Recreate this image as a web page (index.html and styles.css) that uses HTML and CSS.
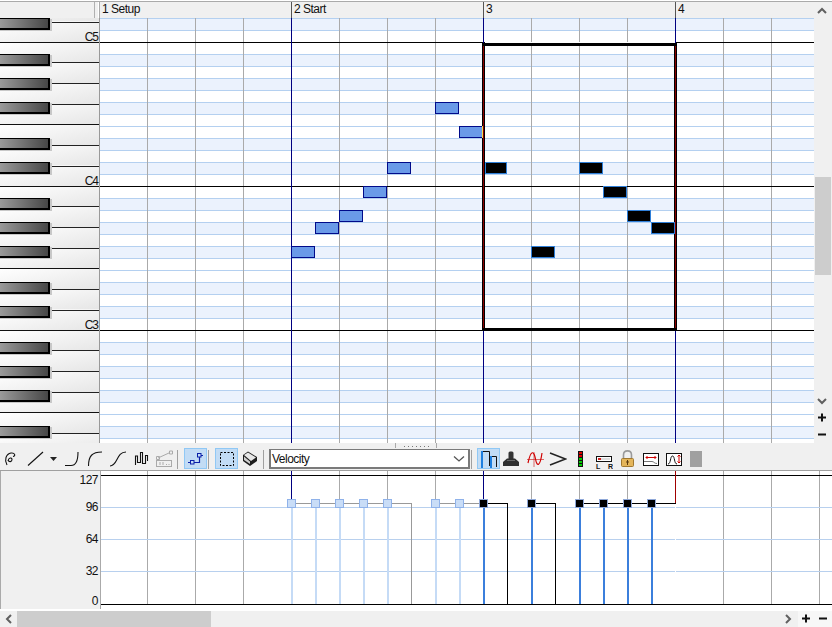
FILE: index.html
```html
<!DOCTYPE html>
<html lang="en">
<head>
<meta charset="utf-8">
<title>Piano roll</title>
<link rel="stylesheet" href="styles.css">
</head>
<body>
<div class="app">
  <div class="upper">
    <div class="editor">
      <div class="ruler">
        <div class="ruler-corner"></div>
        <div class="bar bar-first">1 Setup</div>
        <div class="bar">2 Start</div>
        <div class="bar">3</div>
        <div class="bar bar-last">4</div>
      </div>
      <div class="roll">
        <svg class="piano" viewBox="0 18 100 425" width="100" height="425">
          <defs>
            <linearGradient id="wk" x1="0" y1="0" x2="1" y2="1">
              <stop offset="0" stop-color="#ffffff"/><stop offset="0.45" stop-color="#f4f4f4"/><stop offset="1" stop-color="#e6e6e6"/>
            </linearGradient>
            <linearGradient id="bk" x1="0" y1="0" x2="1" y2="0">
              <stop offset="0" stop-color="#9a9a9a"/><stop offset="1" stop-color="#474747"/>
            </linearGradient>
            <g id="blackkey">
              <rect x="0" y="1" width="52" height="12" fill="#c8c8c8"/>
              <rect x="0" y="0" width="50" height="12" fill="#000"/>
              <rect x="0" y="1" width="48" height="9" fill="url(#bk)"/>
              <rect x="48" y="3" width="1" height="5" fill="#000"/>
            </g>
            <g id="octave">
              <rect x="0" y="0" width="99" height="21" fill="url(#wk)"/>
              <rect x="0" y="21" width="99" height="20" fill="url(#wk)"/>
              <rect x="0" y="41" width="99" height="21" fill="url(#wk)"/>
              <rect x="0" y="62" width="99" height="20" fill="url(#wk)"/>
              <rect x="0" y="82" width="99" height="21" fill="url(#wk)"/>
              <rect x="0" y="103" width="99" height="20" fill="url(#wk)"/>
              <rect x="0" y="123" width="99" height="21" fill="url(#wk)"/>
              <rect x="0" y="0" width="100" height="1" fill="#111"/>
              <rect x="0" y="82" width="100" height="1" fill="#111"/>
              <rect x="50" y="20" width="50" height="1" fill="#222"/>
              <rect x="50" y="41" width="50" height="1" fill="#222"/>
              <rect x="50" y="62" width="50" height="1" fill="#222"/>
              <rect x="50" y="103" width="50" height="1" fill="#222"/>
              <rect x="50" y="124" width="50" height="1" fill="#222"/>
              <use href="#blackkey" y="12"/>
              <use href="#blackkey" y="36"/>
              <use href="#blackkey" y="60"/>
              <use href="#blackkey" y="96"/>
              <use href="#blackkey" y="120"/>
            </g>
          </defs>
          <use href="#octave" y="-102"/>
          <use href="#octave" y="42"/>
          <use href="#octave" y="186"/>
          <use href="#octave" y="330"/>
          <rect x="99" y="18" width="1" height="425" fill="#999"/>
          <text class="key-label" x="98" y="41" text-anchor="end">C5</text>
          <text class="key-label" x="98" y="185" text-anchor="end">C4</text>
          <text class="key-label" x="98" y="329" text-anchor="end">C3</text>
        </svg>
        <svg class="grid" viewBox="100 18 714 425" width="714" height="425" shape-rendering="crispEdges">
          <defs>
            <pattern id="rows" patternUnits="userSpaceOnUse" x="100" y="42" width="48" height="144">
              <rect width="48" height="144" fill="#fff"/>
              <rect y="12" width="48" height="12" fill="#ebf2fd"/>
              <rect y="36" width="48" height="12" fill="#ebf2fd"/>
              <rect y="60" width="48" height="12" fill="#ebf2fd"/>
              <rect y="96" width="48" height="12" fill="#ebf2fd"/>
              <rect y="120" width="48" height="12" fill="#ebf2fd"/>
              <rect y="0" width="48" height="1" fill="#b4d0f0"/>
              <rect y="12" width="48" height="1" fill="#b4d0f0"/>
              <rect y="24" width="48" height="1" fill="#b4d0f0"/>
              <rect y="36" width="48" height="1" fill="#b4d0f0"/>
              <rect y="48" width="48" height="1" fill="#b4d0f0"/>
              <rect y="60" width="48" height="1" fill="#b4d0f0"/>
              <rect y="72" width="48" height="1" fill="#b4d0f0"/>
              <rect y="84" width="48" height="1" fill="#b4d0f0"/>
              <rect y="96" width="48" height="1" fill="#b4d0f0"/>
              <rect y="108" width="48" height="1" fill="#b4d0f0"/>
              <rect y="120" width="48" height="1" fill="#b4d0f0"/>
              <rect y="132" width="48" height="1" fill="#b4d0f0"/>
              <rect x="47" width="1" height="144" fill="#aaa"/>
            </pattern>
          </defs>
          <rect x="100" y="18" width="714" height="425" fill="url(#rows)"/>
          <rect x="100" y="42" width="714" height="1" fill="#000"/>
          <rect x="100" y="186" width="714" height="1" fill="#000"/>
          <rect x="100" y="330" width="714" height="1" fill="#000"/>
          <rect x="291" y="18" width="1" height="425" fill="#000080"/>
          <rect x="483" y="18" width="1" height="425" fill="#000080"/>
          <rect x="675" y="18" width="1" height="425" fill="#000080"/>
          <g class="note">
            <rect x="291.5" y="246.5" width="23" height="11"/>
            <rect x="315.5" y="222.5" width="23" height="11"/>
            <rect x="339.5" y="210.5" width="23" height="11"/>
            <rect x="363.5" y="186.5" width="23" height="11"/>
            <rect x="387.5" y="162.5" width="23" height="11"/>
            <rect x="435.5" y="102.5" width="23" height="11"/>
            <rect x="459.5" y="126.5" width="23" height="11"/>
          </g>
          <rect x="485" y="42" width="190" height="1" fill="#fff"/>
          <rect x="482" y="43" width="195" height="3" fill="#000"/>
          <rect x="482" y="328" width="195" height="3" fill="#000"/>
          <rect x="482" y="43" width="3" height="288" fill="#000"/>
          <rect x="674" y="43" width="3" height="288" fill="#000"/>
          <rect x="483" y="46" width="1" height="282" fill="#8a0000"/>
          <rect x="675" y="46" width="1" height="282" fill="#8a0000"/>
          <rect x="482" y="126" width="1" height="12" fill="#f4d84c"/>
          <g class="note note-on">
            <rect x="485.5" y="162.5" width="21" height="11"/>
            <rect x="531.5" y="246.5" width="23" height="11"/>
            <rect x="579.5" y="162.5" width="23" height="11"/>
            <rect x="603.5" y="186.5" width="23" height="11"/>
            <rect x="627.5" y="210.5" width="23" height="11"/>
            <rect x="651.5" y="222.5" width="23" height="11"/>
          </g>
        </svg>
      </div>
    </div>
    <div class="vscroll">
      <div class="sbtn"><svg width="18" height="17" viewBox="0 0 18 17"><path class="chev" d="M4 11 L8 7 L12 11"/></svg></div>
      <div class="vtrack"><div class="vthumb"></div></div>
      <div class="sbtn"><svg width="18" height="17" viewBox="0 0 18 17"><path class="chev" d="M4 7 L8 11 L12 7"/></svg></div>
      <div class="sbtn"><svg width="18" height="17" viewBox="0 0 18 17"><path class="pm" d="M4 8.5 H12 M8 4.5 V12.500"/></svg></div>
      <div class="sbtn"><svg width="18" height="17" viewBox="0 0 18 17"><path class="pm" d="M4 8.500 H12"/></svg></div>
    </div>
  </div>

  <div class="toolbar">
    <div class="grip"><i></i><i></i><i></i><i></i><i></i><i></i><i></i></div>
    <svg class="ic" viewBox="4 448 16 22" width="16" height="22"><path class="k" d="M7 465 C4 460 6 454 11 453 C15 452.500 16 456 13 456.500 M8 461 C8.500 457.500 12 457 12 459.500 C12 462 9 462.500 8 460"/></svg>
    <svg class="ic" viewBox="26 448 20 22" width="20" height="22"><path class="k" d="M28 465.500 L43 452"/></svg>
    <svg class="ic" viewBox="48 448 10 22" width="10" height="22"><path d="M50 457 H57 L53.500 461 Z" fill="#222"/></svg>
    <svg class="ic" viewBox="63 448 18 22" width="18" height="22"><path class="k" d="M65 465.500 H71 C76 465.500 78 461 78 452"/></svg>
    <svg class="ic" viewBox="86 448 18 22" width="18" height="22"><path class="k" d="M88.500 466 C88.500 456 92 452 102 452"/></svg>
    <svg class="ic" viewBox="109 448 18 22" width="18" height="22"><path class="k" d="M110 466 C118 466 116 452 126 452"/></svg>
    <svg class="ic" viewBox="133 448 18 22" width="18" height="22"><path class="k" d="M135.500 465 V456 H137.500 V462.500 H140.500 V452.500 H142.500 V463.500 H145.500 V455.500 H147.500 V461"/></svg>
    <svg class="ic" viewBox="155 448 18 22" width="18" height="22"><path class="dis" d="M158 458 L170 452.500"/><path class="dis" d="M156.500 456.500 h3 v3 h-3z M169.500 451 h3 v3 h-3z"/><rect class="dis" x="156.500" y="460.500" width="15" height="6"/><path class="dis" d="M160 462 v3 M163 462 v3 M166 464.500 h1 M168.500 464.500 h1"/></svg>
    <div class="sep"></div>
    <div class="tbtn"><svg viewBox="184 448 23 21" width="23" height="21"><path class="b" d="M188 462.500 H190 M194 462.500 H199.500 V457 M201 455.500 H203"/><rect class="bb" x="190.500" y="460.500" width="3.500" height="3.500"/><rect class="bb" x="197.500" y="453.500" width="3.500" height="3.500"/></svg></div>
    <div class="sep"></div>
    <div class="tbtn"><svg viewBox="215 448 23 21" width="23" height="21"><rect x="220.500" y="452.500" width="13" height="13" fill="none" stroke="#000" stroke-width="1" stroke-dasharray="2 1.500"/></svg></div>
    <svg class="ic" viewBox="241 448 18 22" width="18" height="22"><path d="M243 455 L248 451.500 L257 457 V461 L250 466 L243 461 Z" fill="#1c1c1c"/><path d="M244 455 L248 452.500 L256 457.500 L251 461 Z" fill="#e8e8e8"/><path d="M244 456.500 L250 461.500 V464 L244 460 Z" fill="#cfcfcf"/></svg>
    <div class="sep"></div>
    <div class="select"><span>Velocity</span><svg width="12" height="8" viewBox="0 0 12 8"><path d="M1 1.500 L6 6 L11 1.500" fill="none" stroke="#555" stroke-width="1.300"/></svg></div>
    <div class="sep"></div>
    <div class="tbtn"><svg viewBox="477 448 23 21" width="23" height="21"><path d="M482 468 V451 M491 468 V456" stroke="#1d7fe0" stroke-width="2" fill="none"/><path d="M483 451.500 H489.500 V466 M492 456.500 H496.500 V467" stroke="#111" fill="none"/></svg></div>
    <svg class="ic" viewBox="503 448 17 22" width="17" height="22"><rect x="508.500" y="451.500" width="5" height="9" rx="1.500" fill="#333"/><path d="M503 466 V462 L507 458.500 H515 L519 462 V466 Z" fill="#2e2e2e"/><rect x="507" y="460" width="8" height="1" fill="#666"/></svg>
    <svg class="ic" viewBox="525 448 19 22" width="19" height="22"><path d="M526 459.500 H543 M533 452 V467" stroke="#d03030" stroke-width="0.700" fill="none"/><path d="M527 463 C530 449 533 451 534.500 459 C536 467 539 467 541 453" stroke="#d00000" stroke-width="1.200" fill="none"/></svg>
    <svg class="ic" viewBox="548 448 18 22" width="18" height="22"><path d="M549 453 L564.500 459 L549 465" stroke="#222" stroke-width="1.500" fill="none"/></svg>
    <svg class="ic" viewBox="576 448 7 22" width="7" height="22" shape-rendering="crispEdges"><rect x="577" y="451" width="5" height="16" fill="#111"/><rect x="578" y="452" width="3" height="2" fill="#e00000"/><rect x="578" y="455" width="3" height="2" fill="#e00000"/><rect x="578" y="458" width="3" height="2" fill="#00d000"/><rect x="578" y="461" width="3" height="2" fill="#00d000"/><rect x="578" y="464" width="3" height="2" fill="#00d000"/></svg>
    <svg class="ic" viewBox="594 448 18 22" width="18" height="22"><rect x="595.500" y="456.500" width="15" height="5" fill="#fff" stroke="#111"/><rect x="597" y="458" width="3" height="2" fill="#d02020"/><rect x="600" y="458" width="9" height="2" fill="#ddd"/><text class="lr" x="595" y="469">L</text><text class="lr" x="607" y="469">R</text></svg>
    <svg class="ic" viewBox="618 448 16 22" width="16" height="22"><path d="M621.500 458 V455 C621.500 449.500 629.500 449.500 629.500 455 V458" stroke="#9a9a9a" stroke-width="1.600" fill="none"/><rect x="619.500" y="458.500" width="12" height="8" rx="1" fill="#e4b55a" stroke="#a07830"/><path d="M625.500 460 V465 M624 462 H627" stroke="#5a3a10" fill="none"/></svg>
    <svg class="ic" viewBox="640 448 18 22" width="18" height="22"><rect x="641.500" y="453.500" width="15" height="12" fill="#fff" stroke="#111"/><path d="M644 457.500 H654 M645.500 456 L644 457.500 L645.500 459 M652.500 456 L654 457.500 L652.500 459" stroke="#d00000" fill="none"/><path d="M642 461.500 H650 C652 461.500 652 463.500 655 463.500" stroke="#777" fill="none"/></svg>
    <svg class="ic" viewBox="663 448 18 22" width="18" height="22"><rect x="664.500" y="453.500" width="15" height="12" fill="#fff" stroke="#111"/><path d="M666 464 C669 464 668 456 670.500 456 C673 456 672 464 675 464" stroke="#111" fill="none"/><path d="M677 455 V463 M675.500 456.500 L677 455 L678.500 456.500 M675.500 461.500 L677 463 L678.500 461.500" stroke="#d00000" fill="none"/></svg>
    <div class="graybox"></div>
  </div>

  <div class="ctrl">
    <div class="axis">
      <div class="tick">127</div>
      <div class="tick">96</div>
      <div class="tick">64</div>
      <div class="tick">32</div>
      <div class="tick">0</div>
    </div>
    <svg class="plot" viewBox="101 471 731 138" width="731" height="138" shape-rendering="crispEdges">
      <rect x="101" y="471" width="731" height="138" fill="#fff"/>
      <path class="vg" d="M147.500 471 V604 M195.500 471 V604 M243.500 471 V604 M339.500 471 V500 M387.500 471 V500 M435.500 471 V500 M531.500 471 V500 M579.500 471 V500 M627.500 471 V500 M723.500 471 V604 M771.500 471 V604 M819.500 471 V604"/>
      <path class="hg" d="M101 507.500 H832 M101 539.500 H832 M101 571.500 H832"/>
      <rect x="101" y="475" width="731" height="1" fill="#000"/>
      <rect x="291" y="471" width="1" height="29" fill="#000080"/>
      <rect x="483" y="471" width="1" height="29" fill="#000080"/>
      <rect x="675" y="471" width="1" height="32" fill="#a00000"/>
      <rect x="675" y="504" width="1" height="100" fill="#fff"/>
      <path class="dur-off" d="M292 503.500 H411.500 V604 M436 503.500 H484"/>
      <path class="dur-on" d="M484 503.500 H507.500 V604 M532 503.500 H555.500 V604 M580 503.500 H675.500"/>
      <g class="stem-off">
        <rect x="291" y="508" width="2" height="96"/>
        <rect x="315" y="508" width="2" height="96"/>
        <rect x="339" y="508" width="2" height="96"/>
        <rect x="363" y="508" width="2" height="96"/>
        <rect x="387" y="508" width="2" height="96"/>
        <rect x="435" y="508" width="2" height="96"/>
        <rect x="459" y="508" width="2" height="96"/>
      </g>
      <g class="stem-on">
        <rect x="483" y="508" width="2" height="96"/>
        <rect x="531" y="508" width="2" height="96"/>
        <rect x="579" y="508" width="2" height="96"/>
        <rect x="603" y="508" width="2" height="96"/>
        <rect x="627" y="508" width="2" height="96"/>
        <rect x="651" y="508" width="2" height="96"/>
      </g>
      <g class="h-off">
        <rect x="287.500" y="499.500" width="8" height="8"/>
        <rect x="311.500" y="499.500" width="8" height="8"/>
        <rect x="335.500" y="499.500" width="8" height="8"/>
        <rect x="359.500" y="499.500" width="8" height="8"/>
        <rect x="383.500" y="499.500" width="8" height="8"/>
        <rect x="431.500" y="499.500" width="8" height="8"/>
        <rect x="455.500" y="499.500" width="8" height="8"/>
      </g>
      <g class="h-on">
        <rect x="479.500" y="499.500" width="8" height="8"/>
        <rect x="527.500" y="499.500" width="8" height="8"/>
        <rect x="575.500" y="499.500" width="8" height="8"/>
        <rect x="599.500" y="499.500" width="8" height="8"/>
        <rect x="623.500" y="499.500" width="8" height="8"/>
        <rect x="647.500" y="499.500" width="8" height="8"/>
      </g>
      <rect x="101" y="604" width="731" height="1" fill="#000"/>
    </svg>
  </div>

  <div class="hscroll">
    <div class="hbtn"><svg width="17" height="16" viewBox="0 0 17 16"><path class="chev" d="M11 4 L7 8 L11 12"/></svg></div>
    <div class="hthumb"></div>
    <div class="htrack"></div>
    <div class="hbtn"><svg width="17" height="16" viewBox="0 0 17 16"><path class="chev" d="M5 4 L9 8 L5 12"/></svg></div>
    <div class="hzoom">
      <svg width="17" height="16" viewBox="0 0 17 16"><path class="pm" d="M4 7.500 H12 M8 3.500 V11.500"/></svg>
      <svg width="17" height="16" viewBox="0 0 17 16"><path class="pm" d="M4 7.500 H12"/></svg>
    </div>
  </div>
</div>
</body>
</html>
```

FILE: styles.css
```css
* { box-sizing: border-box; }
html, body { margin: 0; padding: 0; background: #fff; }
body { font-family: "Liberation Sans", Arial, sans-serif; font-size: 12px; letter-spacing: -0.5px; color: #111; overflow: hidden; }
svg { display: block; }

.app { width: 832px; height: 627px; display: flex; flex-direction: column; overflow: hidden; }
.upper { display: flex; height: 443px; }
.editor { width: 814px; display: flex; flex-direction: column; }

.ruler { height: 18px; margin-top: 1px; margin-bottom: -1px; display: flex; background: #f0f0f0; border-top: 1px solid #aaa; border-bottom: 1px solid #999; flex: none; }
.ruler-corner { width: 99px; flex: none; background: #f0f0f0; box-shadow: inset -1px 0 0 #fff, inset -4px 0 0 #f0f0f0, inset -5px 0 0 #b0b0b0; }
.bar { width: 192px; flex: none; padding-left: 2px; line-height: 15px; border-left: 1px solid #555; white-space: nowrap; }
.bar-first { border-left-color: #aaa; }
.bar-last { width: auto; flex: 1; }

.roll { display: flex; height: 425px; flex: none; }
.piano, .grid { flex: none; }
.key-label { font-family: "Liberation Sans", Arial, sans-serif; font-size: 12px; letter-spacing: -1px; fill: #111; }
.note rect { fill: #6a9ae8; stroke: #000a8a; stroke-width: 1; }
.note-on rect { fill: #000; stroke: #2f7fd8; }

.vscroll { width: 18px; height: 442px; margin-top: 1px; flex: none; display: flex; flex-direction: column; background: #f0f0f0; border-top: 1px solid #aaa; }
.sbtn { height: 17px; flex: none; }
.vtrack { flex: 1; }
.vthumb { margin-top: 158px; margin-left: 1px; width: 16px; height: 98px; background: #cdcdcd; }
.chev { fill: none; stroke: #606060; stroke-width: 2; }
.pm { fill: none; stroke: #111; stroke-width: 2; }

.toolbar { position: relative; height: 28px; flex: none; background: #f0f0f0; border-bottom: 1px solid #a0a0a0; display: grid; align-items: start; padding-top: 5px; padding-left: 4px;
  grid-template-columns: 22px 22px 15px 23px 23px 24px 22px 22px 7px 24px 7px 26px 22px 6px 202px 6px 26px 23px 23px 28px 18px 25px 22px 23px 25px 12px; }
.ic { justify-self: start; }
.k { fill: none; stroke: #111; stroke-width: 1.100; }
.dis { fill: none; stroke: #aaa; stroke-width: 1; }
.sep { width: 1px; height: 19px; margin-top: 2px; background: #a0a0a0; }
.tbtn { width: 23px; height: 21px; background: #c2dcf5; outline: 1px solid #90c8f5; outline-offset: -1px; }
.b { fill: none; stroke: #0a1fa8; stroke-width: 1.200; }
.bb { fill: #c2dcf5; stroke: #0a1fa8; stroke-width: 1; }
.lr { font-family: "Liberation Sans", Arial, sans-serif; font-size: 7px; font-weight: bold; fill: #111; letter-spacing: 0; }
.select { width: 201px; height: 20px; margin-top: 1px; background: #fff; border-style: solid; border-color: #7a7a7a; border-width: 1px 2px 2px 2px; display: flex; align-items: center; justify-content: space-between; padding: 0 3px 0 1px; }
.graybox { width: 12px; height: 16px; margin-top: 3px; background: #a0a0a0; }
.grip { position: absolute; left: 395px; top: 0; width: 42px; height: 5px; display: flex; justify-content: center; gap: 3px; border-left: 1px solid #aaa; border-right: 1px solid #aaa; padding-top: 3px; }
.grip i { width: 1px; height: 1px; background: #777; }

.ctrl { display: flex; height: 138px; flex: none; }
.axis { width: 101px; flex: none; background: #f0f0f0; border-left: 1px solid #aaa; border-right: 1px solid #aaa; padding: 2px 2px 0 0; display: grid; grid-template-rows: 27px 32px 32px 30px 14px; text-align: right; line-height: 14px; }
.plot { flex: none; }
.vg { stroke: #aaa; fill: none; }
.hg { stroke: #b8d0ee; fill: none; }
.dur-off { stroke: #999; fill: none; }
.dur-on { stroke: #000; fill: none; }
.stem-off rect { fill: #c5dbf6; }
.stem-on rect { fill: #3b7fdc; }
.h-off rect { fill: #c9ddf7; stroke: #8fb2ea; }
.h-on rect { fill: #000; stroke: #8fa8d8; }

.hscroll { height: 16px; margin-top: 2px; flex: none; display: flex; background: #f0f0f0; }
.hbtn { width: 17px; flex: none; }
.hthumb { width: 194px; flex: none; background: #cdcdcd; }
.htrack { flex: 1; }
.hzoom { width: 34px; flex: none; display: flex; background: #f7f7f7; }
```
